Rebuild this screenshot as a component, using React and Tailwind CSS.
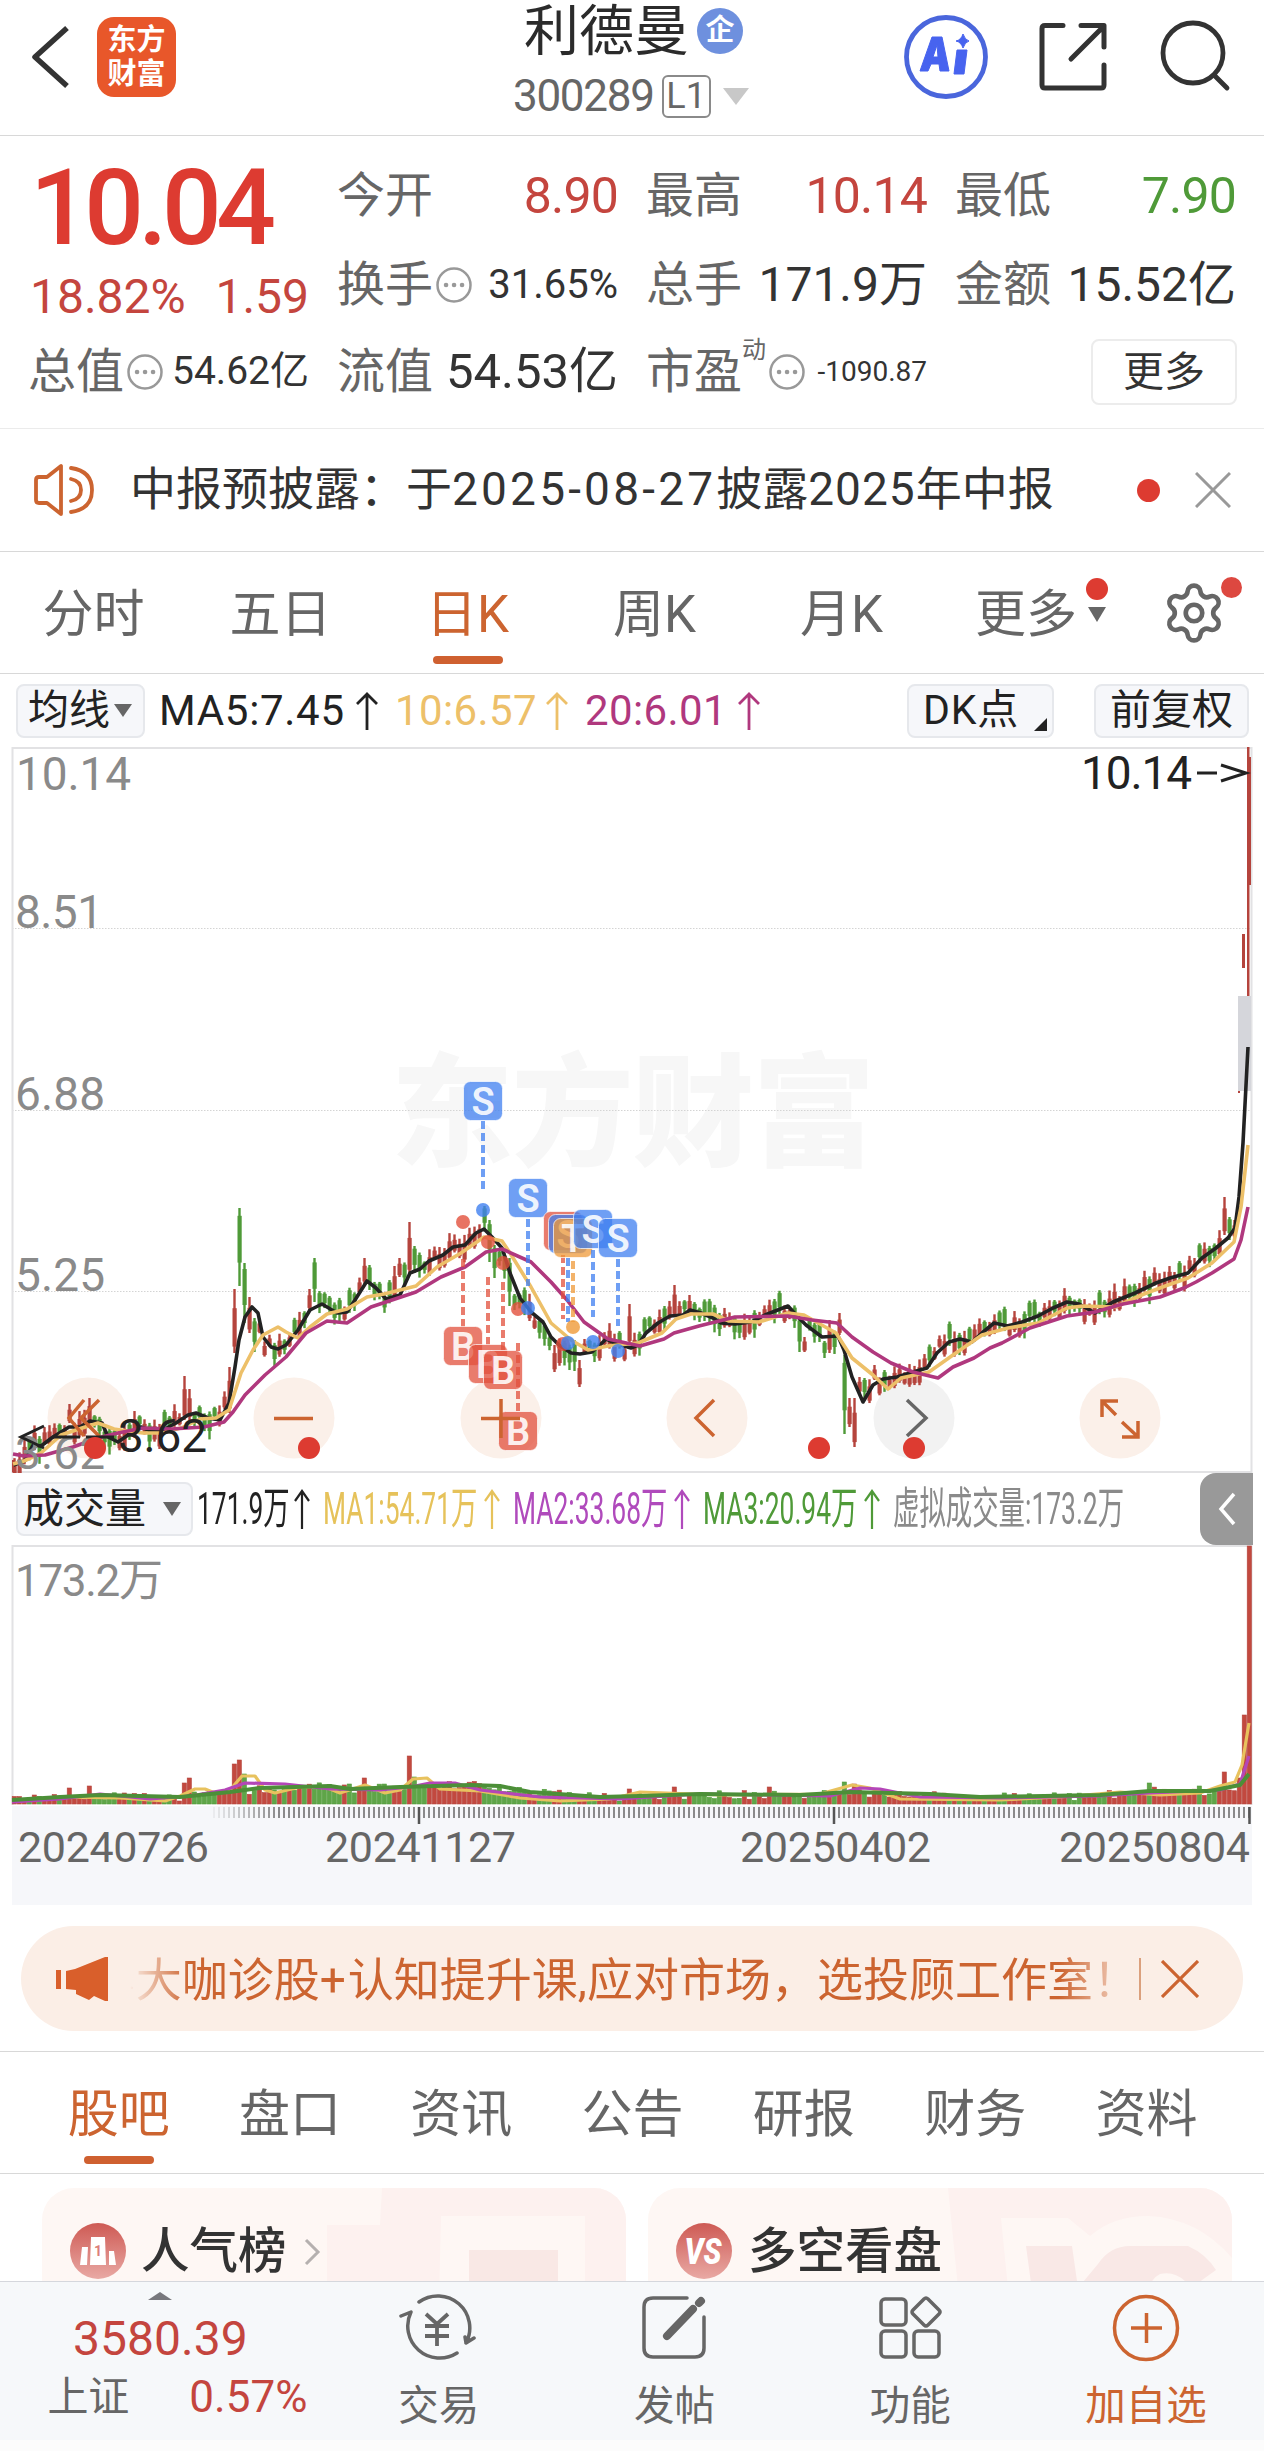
import { Settings } from 'lucide-react'

const RED = '#b5443d'
const GREEN = '#4f9a38'

// moving averages, in page pixels
const MA5 = '13.5,1465 24.5,1461 33,1445 41,1446 53,1437 69,1427 80,1427 90,1421 102,1423 108,1437 118,1442 131,1433 141,1427 151,1431 163,1430 176,1423 188,1415 196,1413 208,1418 220,1420 229,1403 235,1367 239,1340 245,1317 252,1307 258,1313 263,1337 271,1347 278,1349 286,1345 298,1330 310,1310 322,1304 337,1313 347,1312 355,1300 367,1281 376,1288 386,1299 400,1295 410,1273 420,1269 429,1261 443,1255 453,1247 465,1245 476,1233 484,1229 492,1237 502,1248 510,1273 520,1298 531,1312 543,1322 551,1337 559,1345 571,1353 580,1354 592,1352 600,1345 606,1339 614,1343 631,1348 638,1345 646,1333 658,1323 670,1316 683,1315 690,1310 701,1313 713,1318 721,1323 735,1324 751,1322 765,1315 788,1306 796,1315 806,1325 822,1337 838,1336 844,1350 852,1377 863,1402 873,1385 883,1379 897,1377 913,1372 927,1368 937,1353 949,1342 960,1339 972,1342 982,1333 994,1323 1008,1326 1022,1322 1038,1316 1053,1308 1067,1302 1079,1304 1095,1313 1113,1302 1135,1293 1156,1283 1170,1278 1188,1273 1202,1258 1216,1248 1228,1238 1235,1228 1239,1197 1243,1143 1248,1047'
const MA10 = '13,1464 24,1461 41,1453 61,1435 82,1428 98,1423 114,1429 127,1431 143,1433 163,1433 184,1427 200,1419 216,1418 229,1410 241,1373 253,1350 263,1335 278,1327 286,1332 298,1338 310,1327 327,1314 347,1309 367,1297 384,1294 400,1290 416,1286 437,1267 461,1253 484,1237 502,1241 510,1253 531,1287 551,1323 571,1340 588,1350 608,1346 638,1343 662,1333 676,1319 691,1314 713,1314 729,1321 759,1322 788,1313 804,1315 836,1333 852,1358 873,1375 888,1389 901,1378 929,1372 953,1355 982,1335 1008,1328 1038,1323 1067,1308 1083,1306 1115,1307 1144,1294 1168,1285 1188,1278 1212,1263 1234,1242 1241,1207 1248,1145'
const MA20 = '13,1454 24,1456 45,1455 73,1447 98,1438 118,1433 143,1428 171,1429 204,1427 224,1422 233,1412 245,1395 265,1375 286,1357 306,1333 327,1321 347,1323 371,1307 392,1300 416,1292 441,1277 465,1267 486,1252 502,1249 531,1262 551,1282 567,1300 584,1322 608,1339 640,1346 664,1339 674,1333 699,1326 735,1317 788,1316 812,1320 837,1323 852,1337 873,1352 891,1363 913,1372 938,1378 953,1367 974,1358 990,1348 1002,1343 1030,1328 1067,1316 1095,1312 1123,1304 1160,1297 1184,1288 1196,1282 1212,1273 1234,1259 1241,1240 1248,1207'

const VOL_A = '12,1801 60,1797 120,1798 165,1801 180,1796 195,1789 205,1789 215,1793 230,1790 242,1776 255,1776 265,1790 275,1793 300,1787 325,1787 340,1793 365,1785 385,1793 400,1790 413,1779 427,1778 440,1789 480,1791 520,1798 560,1801 610,1799 640,1792 720,1795 820,1794 852,1785 870,1788 900,1799 1000,1800 1060,1797 1120,1792 1160,1795 1200,1793 1220,1786 1235,1782 1242,1765 1249,1723'
const VOL_B = '12,1802 60,1799 100,1794 150,1799 190,1796 225,1790 245,1783 285,1784 330,1789 380,1790 410,1787 430,1783 455,1783 480,1790 540,1797 620,1799 700,1794 830,1796 860,1788 880,1789 920,1797 1000,1798 1100,1796 1150,1793 1220,1790 1240,1784 1249,1756'
const VOL_C = '12,1800 60,1797 100,1795 180,1797 230,1792 260,1788 330,1786 350,1789 400,1787 470,1785 500,1786 530,1792 600,1797 640,1796 700,1794 800,1795 850,1792 930,1794 980,1797 1100,1795 1150,1791 1210,1791 1240,1785 1249,1774'

const parse = (s) => s.split(' ').map((p) => p.split(',').map(Number))
const at = (pts, x) => {
  const i = pts.findIndex((p) => p[0] >= x)
  if (i <= 0) return i === 0 ? pts[0][1] : pts[pts.length - 1][1]
  const [x0, y0] = pts[i - 1]
  const [x1, y1] = pts[i]
  return y0 + ((y1 - y0) * (x - x0)) / (x1 - x0)
}
const rnd = (i) => {
  const v = Math.sin(i * 127.1 + 11.7) * 43758.5453
  return v - Math.floor(v)
}

// bar index -> [high, low, up]
const SPIKES = {
  11: [1404, 1423, 1], 15: [1398, 1425, 1], 34: [1376, 1420, 1], 35: [1389, 1420, 1],
  43: [1367, 1413, 1], 44: [1289, 1353, 1], 45: [1208, 1286, 0], 46: [1263, 1323, 0],
  47: [1297, 1333, 1], 48: [1318, 1352, 0], 59: [1289, 1310, 1], 60: [1258, 1302, 0],
  70: [1258, 1284, 1], 71: [1265, 1290, 0], 76: [1266, 1300, 1], 77: [1258, 1277, 1],
  79: [1222, 1275, 1], 80: [1246, 1273, 0], 94: [1206, 1230, 0], 95: [1220, 1262, 0],
  96: [1245, 1278, 0], 99: [1258, 1306, 0], 100: [1294, 1310, 0], 108: [1345, 1372, 1],
  112: [1340, 1371, 0], 113: [1360, 1387, 1], 123: [1304, 1345, 1], 132: [1285, 1317, 1],
  135: [1295, 1315, 1], 157: [1317, 1352, 0], 158: [1337, 1352, 1], 162: [1341, 1358, 0],
  163: [1320, 1353, 1], 165: [1313, 1335, 1], 166: [1355, 1434, 0], 167: [1398, 1427, 1],
  168: [1398, 1447, 1], 169: [1377, 1393, 1], 170: [1378, 1398, 0], 172: [1365, 1380, 1],
  242: [1197, 1235, 1], 243: [1217, 1240, 0], 244: [1220, 1238, 1],
}
const VOL_SPIKES = {
  11: 1788, 15: 1786, 34: 1783, 35: 1778, 44: 1764, 45: 1760, 46: 1774, 67: 1784, 70: 1778,
  79: 1756, 80: 1777, 123: 1789, 132: 1787, 151: 1787, 166: 1782, 168: 1784, 227: 1783,
  237: 1786, 242: 1772, 245: 1778, 246: 1715, 247: 1546,
}

const ma5 = parse(MA5)
const volC = parse(VOL_C)
const bars = Array.from({ length: 248 }, (_, i) => {
  const x = 14.5 + i * 5
  const mid = at(ma5, x)
  const slope = at(ma5, x + 8) - at(ma5, x - 4)
  const s = SPIKES[i]
  const up = s ? s[2] : rnd(i) + (slope < 0 ? 0.15 : -0.15) > 0.48
  const c = mid + slope * 0.25 + (rnd(i + 400) - 0.5) * 14
  const half = 6 + rnd(i + 90) * 8
  const high = s ? s[0] : c - half
  const low = s ? s[1] : c + half
  const base = at(volC, x)
  const vol = VOL_SPIKES[i] ?? Math.min(1801, base + (rnd(i + 700) - 0.45) * 9)
  // the tall bar of this run closed down, though its volume is drawn as a rise
  const volUp = up || i > 240 || i === 45
  return { i, x, up, high, low, vol, volUp }
})

const MARKS = [
  { t: 'B', x: 463, y: 1346, a: 1259, b: 1327, dot: 1222 },
  { t: 'B', x: 488, y: 1364, a: 1277, b: 1345, dot: 1242 },
  { t: 'B', x: 503, y: 1370, a: 1282, b: 1350, dot: 1263 },
  { t: 'B', x: 518, y: 1431, a: 1343, b: 1411, dot: 1309 },
  { t: 'S', x: 483, y: 1101, a: 1121, b: 1189, dot: 1210 },
  { t: 'S', x: 528, y: 1198, a: 1219, b: 1286, dot: 1308 },
  { t: '', x: 563, y: 1231, a: 1255, b: 1319, dot: 1344, color: '#e2503c' },
  { t: 'S', x: 568, y: 1234, a: 1258, b: 1322, dot: 1343 },
  { t: 'T', x: 573, y: 1238, a: 1261, b: 1322, dot: 1327, color: '#ef9a38' },
  { t: 'S', x: 593, y: 1229, a: 1250, b: 1317, dot: 1342 },
  { t: 'S', x: 618, y: 1238, a: 1259, b: 1326, dot: 1351 },
]

function Mark({ t, x, y, a, b, dot, color }) {
  const fill = color || (t === 'B' ? '#e2503c' : '#3f7ff0')
  return (
    <g>
      <line x1={x} x2={x} y1={a} y2={b} stroke={fill} strokeOpacity="0.75" strokeWidth="4" strokeDasharray="8 4" />
      <circle cx={x} cy={dot} r="7" fill={fill} fillOpacity="0.8" />
      <rect x={x - 19.5} y={y - 19.5} width="39" height="39" rx="7" fill={fill} fillOpacity="0.75" stroke="#fff" strokeOpacity="0.7" />
      <text x={x} y={y + 13.5} textAnchor="middle" fontSize="38" fontWeight="600" fill="#fff" fillOpacity="0.9">{t}</text>
    </g>
  )
}

function CandleChart() {
  const lines = { fill: 'none', strokeWidth: 3.6, strokeLinejoin: 'round' }
  return (
    <svg className="block" width="1264" height="726" viewBox="0 747 1264 726">
      <text x="391" y="1156" fontSize="122" fontWeight="900" textLength="484" fill="#f7f7f7">东方财富</text>
      <path d="M12 928.5H1251M12 1110.5H1251M12 1291.5H1251" stroke="#d4d4d4" strokeDasharray="1.5 1.5" />
      <path d="M12.500 748V1472H1251.500V748Z" fill="none" stroke="#e2e2e4" strokeWidth="2" />

      <g>
        {[88, 294, 501, 707, 914, 1120].map((x) => (
          <circle key={x} cx={x} cy="1418" r="40.500" fill={x === 914 ? '#f2f2f2' : '#fbf0e9'} />
        ))}
      </g>

      {bars.slice(0, 245).map((b) => {
        const color = b.up ? RED : GREEN
        const h = b.low - b.high
        const body = b.up ? b.high + h * 0.3 : b.high + h * 0.1
        return (
          <g key={b.i} fill={color}>
            <rect x={b.x - 1.2} y={b.high} width="2.400" height={h} />
            <rect x={b.x - 2} y={body} width="4.200" height={h * 0.6} />
          </g>
        )
      })}
      <rect x="1238" y="996" width="13" height="95" fill="#d5d6db" />
      <path d="M12 1460H15V1472H12Z" fill={RED} />
      <path d="M1242 934H1245V968H1242ZM1238 1091H1240V1093H1238ZM1247 747H1249.500V996H1247ZM1247 757H1251V885H1247Z" fill={RED} />

      <polyline points={MA5} stroke="#222" {...lines} />
      <polyline points={MA10} stroke="#edc069" {...lines} />
      <polyline points={MA20} stroke="#b0387e" {...lines} />

      {MARKS.map((m) => <Mark key={m.x} {...m} />)}

      <g fill="none" stroke="#cc6430" strokeWidth="3.500">
        <path d="M84 1400 69 1418 84 1436M99 1400 81 1418 99 1436" />
        <path d="M274 1418.500H313" />
        <path d="M481 1418.500H520M501 1399V1438" />
        <path d="M714 1400 696 1418 714 1436" />
        <path d="M907 1400 926 1418 907 1436" stroke="#666" />
        <path d="M1118 1401H1102V1417M1102 1401 1116 1415M1138 1421V1437H1122M1137 1436 1122 1422" />
      </g>

      <g fontSize="46" fill="#8a8a8a">
        <text x="16" y="790" textLength="115">10.14</text>
        <text x="15" y="928" textLength="88">8.51</text>
        <text x="15" y="1110" textLength="90">6.88</text>
        <text x="15" y="1291" textLength="90">5.25</text>
        <text x="15" y="1469" textLength="90">3.62</text>
      </g>
      <g fill="#222">
        <text x="1081" y="789" fontSize="46" textLength="111">10.14</text>
        <path d="M1197 773H1217M1221 765 1246 773 1221 781" fill="none" stroke="#222" strokeWidth="3" />
        <path d="M44 1426 21 1437 44 1448M52 1437H80M86 1437H114" fill="none" stroke="#222" strokeWidth="3" />
        <text x="118" y="1452" fontSize="46" textLength="89">3.62</text>
      </g>
      {[95, 309, 819, 914].map((x) => (
        <circle key={x} cx={x} cy="1448" r="11" fill="#dd3b31" />
      ))}
    </svg>
  )
}

function VolumeChart() {
  const lines = { fill: 'none', strokeWidth: 3.2, strokeLinejoin: 'round' }
  const ticks = Array.from({ length: 208 }, (_, i) => 214 + i * 5)
  return (
    <svg className="block" width="1264" height="360" viewBox="0 1545 1264 360">
      <rect x="12" y="1806" width="1240" height="99" fill="#f6f7fa" />
      <path d="M12.500 1805V1546H1251.500V1805" fill="none" stroke="#e2e2e4" strokeWidth="2" />
      <text x="15" y="1596" fontSize="44" textLength="148" fill="#8a8a8a">173.2万</text>
      {bars.map((b) => (
        <rect key={b.i} x={b.x - 2.3} y={b.vol} width="4.200" height={1804 - b.vol} fill={b.volUp ? '#c2493f' : '#5fa548'} stroke={b.volUp ? RED : GREEN} strokeWidth="0.6" />
      ))}
      <polyline points={VOL_A} stroke="#e8c25e" {...lines} />
      <polyline points={VOL_B} stroke="#b446b8" {...lines} />
      <polyline points={VOL_C} stroke="#4c8f38" {...lines} strokeWidth={4} />
      {ticks.map((x, i) => (
        <line key={x} x1={x} x2={x} y1="1807" y2="1818" stroke="#666" strokeWidth="1.5" strokeOpacity={Math.min(1, 0.1 + i * 0.07)} />
      ))}
      <path d="M419 1807V1824M834 1807V1824M1249.500 1807V1824" stroke="#555" strokeWidth="2.500" />
      <g fontSize="43" fill="#666">
        <text x="18" y="1862" textLength="191">20240726</text>
        <text x="325" y="1862" textLength="191">20241127</text>
        <text x="740" y="1862" textLength="191">20250402</text>
        <text x="1059" y="1862" textLength="191">20250804</text>
      </g>
    </svg>
  )
}

function UpArrow({ narrow }) {
  return narrow ? (
    <svg width="16" height="42" viewBox="0 0 16 42" fill="none" stroke="currentColor" strokeWidth="2.200">
      <path d="M8 41V3M1 13 8 3 15 13" />
    </svg>
  ) : (
    <svg width="24" height="40" viewBox="0 0 24 40" fill="none" stroke="currentColor" strokeWidth="2.800">
      <path d="M12 39V3M2 13 12 3 22 13" />
    </svg>
  )
}

function Header() {
  return (
    <header className="flex h-[136px] border-b border-[#d8d8d8]">
      <svg className="mt-[24px] ml-[30px] h-[66px] w-[40px]" viewBox="0 0 40 66" fill="none" stroke="#333" strokeWidth="5.500" strokeLinejoin="round">
        <path d="M37 4 5 33 37 62" />
      </svg>
      <div className="mt-[17px] ml-[27px] flex h-[80px] w-[79px] flex-col items-center justify-center rounded-[17px] bg-[#e8572a] text-[29px] leading-[34px] font-bold text-white">
        <span>东方</span>
        <span>财富</span>
      </div>
      <div className="ml-[337px] w-[242px]">
        <div className="flex h-[61px] items-center pl-[11px]">
          <span className="text-[55px] leading-[60px] text-[#2b2b2b]">利德曼</span>
          <span className="ml-[8px] flex h-[46px] w-[46px] items-center justify-center rounded-full bg-[#6e90de] text-[29px] leading-none font-bold text-white">企</span>
        </div>
        <div className="mt-[10px] flex h-[50px] items-center text-[#666]">
          <span className="text-[44px] leading-none tracking-[-1.300px]">300289</span>
          <span className="ml-[8px] flex h-[43px] w-[49px] items-center justify-center rounded-md border-2 border-[#8a8a8a] text-[36px] leading-none">L1</span>
          <span className="ml-[12px] h-0 w-0 border-x-[13px] border-t-[17px] border-x-transparent border-t-[#c8c8c8]" />
        </div>
      </div>
      <svg className="ml-[148px] mt-[14px] h-[86px] w-[86px]" viewBox="0 0 86 86">
        <circle cx="43" cy="43" r="39.500" fill="none" stroke="#4a66dc" strokeWidth="4.800" />
        <path d="M29 23H39L46 57H37L36 50H28L25 57H17ZM34 31 30 43H35ZM54 36H64L61 60H51ZM60 20Q62 26 66 27 62 28 60 34 58 28 53 27 58 26 60 20Z" fill="#4763ef" fillRule="evenodd" stroke="#4763ef" strokeLinejoin="round" />
      </svg>
      <svg className="ml-[48px] mt-[20px] h-[74px] w-[74px]" viewBox="0 0 74 74" fill="none" stroke="#333" strokeWidth="5" strokeLinecap="round" strokeLinejoin="round">
        <path d="M26 5.500H8Q5 5.500 5 8.500V65Q5 68 8 68H64Q67 68 67 65V45M44 5.500H67V27M66 7 34 39" />
      </svg>
      <svg className="ml-[46px] mt-[18px] h-[76px] w-[76px]" viewBox="0 0 76 76" fill="none" stroke="#333" strokeWidth="4.800" strokeLinecap="round">
        <circle cx="36" cy="35" r="30" />
        <path d="M57 57 70 70" />
      </svg>
    </header>
  )
}

function Hint() {
  return (
    <svg className="mr-[4px] ml-[3px] h-[36px] w-[36px] shrink-0" viewBox="0 0 36 36">
      <circle cx="18" cy="18" r="16.500" fill="none" stroke="#999" strokeWidth="2.500" />
      <path d="M10 18H10.100M18 18H18.100M26 18H26.100" stroke="#999" strokeWidth="4.500" strokeLinecap="round" />
    </svg>
  )
}

function Stat({ label, children, value }) {
  return (
    <div className="flex h-[88px] w-[281px] items-center pt-[3px] text-[48px] leading-none whitespace-nowrap text-[#666]">
      <span>{label}</span>
      {children}
      <span className={`ml-auto ${value[1]}`}>{value[0]}</span>
    </div>
  )
}

function Quote() {
  return (
    <section className="h-[293px] border-b border-[#ebebeb] pt-[14px] pl-[28px]">
      <div className="flex gap-[28px]">
        <div className="w-[281px] pl-[2px] whitespace-nowrap text-[#dd3b31]">
          <div className="flex h-[116px] items-center text-[105px] leading-none font-medium tracking-[-5.500px]">10.04</div>
          <div className="flex h-[62px] items-center justify-between text-[48px] leading-none text-[#c4453e]">
            <span>18.82%</span>
            <span>1.59</span>
          </div>
        </div>
        <div className="grid grid-cols-3 gap-x-[28px]">
          <Stat label="今开" value={['8.90', 'text-[50px] tracking-[-0.800px] text-[#c4453e]']} />
          <Stat label="最高" value={['10.14', 'text-[50px] tracking-[-0.800px] text-[#c4453e]']} />
          <Stat label="最低" value={['7.90', 'text-[50px] tracking-[-0.800px] text-[#4f9a38]']} />
          <Stat label="换手" value={['31.65%', 'text-[40px] text-[#333]']}><Hint /></Stat>
          <Stat label="总手" value={['171.9万', 'text-[#333]']} />
          <Stat label="金额" value={['15.52亿', 'text-[#333]']} />
        </div>
      </div>
      <div className="-mt-[2px] flex gap-[28px]">
        <Stat label="总值" value={['54.62亿', 'text-[39px] text-[#333]']}><Hint /></Stat>
        <Stat label="流值" value={['54.53亿', 'text-[49px] text-[#333]']} />
        <Stat label="市盈" value={['-1090.87', 'text-[28px] text-[#333]']}>
          <span className="-mt-[44px] text-[24px]">动</span>
          <span className="flex"><Hint /></span>
        </Stat>
        <div className="mt-[13px] ml-[136px] flex h-[66px] w-[146px] items-center justify-center rounded-lg border-2 border-[#ececec] text-[41px] leading-none text-[#333]">更多</div>
      </div>
    </section>
  )
}

function Notice() {
  return (
    <section className="flex h-[123px] items-center border-b border-[#d8d8d8]">
      <svg className="ml-[32px] h-[54px] w-[64px]" viewBox="0 0 64 54" fill="none" stroke="#cc6430" strokeWidth="3.800" strokeLinecap="round" strokeLinejoin="round">
        <path d="M29 3V51L15 40H7Q4 40 4 37V17Q4 14 7 14H15ZM39 5Q60 8 60 27T39 49M39 16Q49 18 49 27T39 38" />
      </svg>
      <p className="mb-[3px] ml-[34px] w-[930px] text-[46px] leading-none whitespace-nowrap text-[#333]">
        中报预披露：于<span className="tracking-[3.200px]">2025-08-27</span>披露<span className="tracking-[1px]">2025</span>年中报
      </p>
      <span className="ml-[77px] h-[23px] w-[23px] rounded-full bg-[#dd3b31]" />
      <svg className="ml-[35px] h-[36px] w-[36px]" viewBox="0 0 36 36" stroke="#999" strokeWidth="3">
        <path d="M1 1 35 35M35 1 1 35" />
      </svg>
    </section>
  )
}

function PeriodTabs() {
  const tabs = ['分时', '五日', '日K', '周K', '月K']
  return (
    <nav className="flex h-[122px] items-center border-b border-[#d8d8d8] text-[51px] leading-none text-[#666]">
      {tabs.map((t) => (
        <div key={t} className={`relative flex h-full w-[187px] items-center justify-center pt-[3px] ${t === '日K' ? 'text-[#cc6430]' : ''}`}>
          {t}
          {t === '日K' && <span className="absolute bottom-[9px] h-[8px] w-[70px] rounded-full bg-[#cf6030]" />}
        </div>
      ))}
      <div className="relative ml-[40px] flex items-center pt-[3px]">
        更多
        <span className="ml-[11px] border-x-[9px] border-t-[15px] border-x-transparent border-t-[#666]" />
        <span className="absolute -top-[8px] -right-[2px] h-[22px] w-[22px] rounded-full bg-[#dd3b31]" />
      </div>
      <div className="relative ml-[55px]">
        <Settings className="h-[66px] w-[66px]" strokeWidth={1.7} />
        <span className="absolute -top-[3px] -right-[15px] h-[21px] w-[21px] rounded-full bg-[#dd4840]" />
      </div>
    </nav>
  )
}

const chip = 'flex items-center rounded-lg border-2 border-[#e6e8ec] bg-[#f6f7fa] text-[41px] leading-none text-[#222] whitespace-nowrap'

function AverageBar() {
  return (
    <div className="flex h-[73px] items-center text-[42px] leading-none whitespace-nowrap">
      <div className={`${chip} ml-[16px] h-[54px] w-[129px] pl-[10px]`}>
        均线
        <span className="ml-[4px] border-x-[9px] border-t-[13px] border-x-transparent border-t-[#666]" />
      </div>
      <div className="ml-[14px] flex w-[236px] items-center justify-between pr-[16px] text-[#222]"><span className="tracking-[0.700px]">MA5:7.45</span><UpArrow /></div>
      <div className="flex w-[190px] items-center justify-between pr-[16px] text-[#edc069]"><span className="tracking-[0.400px]">10:6.57</span><UpArrow /></div>
      <div className="flex w-[176px] items-center justify-between text-[#b0387e]"><span className="tracking-[0.400px]">20:6.01</span><UpArrow /></div>
      <div className={`${chip} ml-[146px] h-[54px] w-[147px] justify-between pr-[5px] pl-[14px]`}>
        <span className="tracking-[0.800px]">DK点</span>
        <span className="mt-[28px] border-b-[13px] border-l-[13px] border-b-[#222] border-l-transparent" />
      </div>
      <div className={`${chip} ml-[40px] h-[54px] w-[155px] justify-center`}>前复权</div>
    </div>
  )
}

function VolumeItem({ text, box, color }) {
  return (
    <div className={`flex items-center ${color}`}>
      <span className={`block ${box}`}>
        <span className="inline-block origin-left scale-x-60">{text}</span>
      </span>
      <UpArrow narrow />
    </div>
  )
}

function VolumeBar() {
  return (
    <div className="flex h-[72px] items-center text-[44px] leading-none whitespace-nowrap">
      <div className={`${chip} ml-[16px] h-[54px] w-[177px] pl-[5px]`}>
        成交量
        <span className="ml-[17px] border-x-[9px] border-t-[14px] border-x-transparent border-t-[#666]" />
      </div>
      <div className="flex gap-[13px] pl-[4px]">
        <VolumeItem text="171.9万" box="w-[97px]" color="text-[#222]" />
        <VolumeItem text="MA1:54.71万" box="w-[161px]" color="text-[#e6c25a]" />
        <VolumeItem text="MA2:33.68万" box="w-[161px]" color="text-[#b04abc]" />
        <VolumeItem text="MA3:20.94万" box="w-[161px]" color="text-[#4f9a38]" />
      </div>
      <span className="ml-[13px] w-[307px] text-[#8a8a8a]">
        <span className="inline-block origin-left scale-x-60">虚拟成交量:173.2万</span>
      </span>
      <div className="flex h-[72px] w-[53px] items-center justify-center rounded-l-2xl bg-[#999]">
        <svg width="20" height="34" viewBox="0 0 20 34" fill="none" stroke="#fff" strokeWidth="3.500">
          <path d="M17 2 4 17 17 32" />
        </svg>
      </div>
    </div>
  )
}

function Banner() {
  return (
    <section className="h-[147px] border-b border-[#d8d8d8] px-[21px] pt-[21px]">
      <div className="flex h-[105px] items-center rounded-full bg-[#fbeee6] text-[#cc6430]">
        <svg className="ml-[34px] h-[46px] w-[54px]" viewBox="0 0 54 46" fill="#d95f2b">
          <path d="M1 14H6V33H1ZM11 15 20 13 50 1H53V45H50L39 40 34 44 21 38V34L11 33Z" />
        </svg>
        <p className="mt-[3px] ml-[20px] w-[990px] overflow-hidden text-[46px] leading-[66px] whitespace-nowrap [mask-image:linear-gradient(to_right,transparent,black_60px,black_930px,transparent_1010px)]">
          <span className="mr-[1px] text-[22px] leading-none">·</span>大咖诊股<span className="tracking-[2px]">+</span>认知提升课,应对市场，选投顾工作室！
        </p>
        <span className="ml-[20px] h-[42px] w-[2px] bg-[#dba07d]" />
        <svg className="ml-[20px] h-[38px] w-[38px]" viewBox="0 0 38 38" stroke="#cc6430" strokeWidth="3.200">
          <path d="M1 1 37 37M37 1 1 37" />
        </svg>
      </div>
    </section>
  )
}

function SectionTabs() {
  const tabs = ['股吧', '盘口', '资讯', '公告', '研报', '财务', '资料']
  return (
    <nav className="flex h-[122px] border-b border-[#d8d8d8] pl-[33px] text-[51px] leading-none text-[#666]">
      {tabs.map((t, i) => (
        <div key={t} className={`relative flex w-[171.300px] items-center justify-center pt-[3px] ${i === 0 ? 'text-[#cc6430]' : ''}`}>
          {t}
          {i === 0 && <span className="absolute bottom-[9px] h-[8px] w-[70px] rounded-full bg-[#cf6030]" />}
        </div>
      ))}
    </nav>
  )
}

function Cards() {
  return (
    <section className="flex h-[107px] gap-[22px] overflow-hidden pt-[14px] pl-[42px] text-[48.500px] leading-none font-medium text-[#333]">
      <div className="relative h-[200px] w-[584px] overflow-hidden rounded-[32px] bg-[#fef7f4]">
        <svg className="absolute inset-0" width="584" height="200">
          <path d="M340 0H584V200H285V37H338Z" fill="#fdf1ef" />
          <path d="M399 28H543V200H395Z" fill="#fef7f4" />
          <path d="M427 62H516V200H427Z" fill="#f9e8e5" />
        </svg>
        <div className="relative flex h-[128px] items-center pl-[28px]">
          <svg className="mb-[2px]" width="56" height="56" viewBox="0 0 56 56">
            <defs>
              <linearGradient id="badge" x2="0" y2="1">
                <stop stopColor="#ce5a54" />
                <stop offset="1" stopColor="#e9a9a4" />
              </linearGradient>
            </defs>
            <circle cx="28" cy="28" r="28" fill="url(#badge)" />
            <path d="M12 24H18L17 42H10ZM21 14H35L36 42H20ZM39 28H44L46 42H39Z" fill="#fff" />
            <text x="28" y="33" textAnchor="middle" fontSize="14" fontWeight="700" fill="#dd7f79">1</text>
          </svg>
          <span className="ml-[15px]">人气榜</span>
          <svg className="ml-[17px]" width="18" height="30" viewBox="0 0 18 30" fill="none" stroke="#b5b0af" strokeWidth="3">
            <path d="M2 3 14 15 2 27" />
          </svg>
        </div>
      </div>
      <div className="relative h-[200px] w-[584px] overflow-hidden rounded-[32px] bg-[#fef7f4]">
        <svg className="absolute inset-0" width="584" height="200">
          <path d="M300 0H584V200H320Z" fill="#fdf1ef" />
          <path d="M353 30H420L442 48Q465 28 500 28 550 30 584 70V200H370Z" fill="#fef7f4" />
          <path d="M378 58H424L430 100 450 76Q462 58 482 58H540Q558 66 568 82L543 100Q530 82 512 86 500 92 500 110H385Z" fill="#f9e8e6" />
        </svg>
        <div className="relative flex h-[128px] items-center pl-[28px]">
          <svg className="mb-[2px]" width="56" height="56" viewBox="0 0 56 56">
            <circle cx="28" cy="28" r="28" fill="url(#badge)" />
            <text x="27" y="41" textAnchor="middle" fontSize="36" fontWeight="900" fontStyle="italic" textLength="37" lengthAdjust="spacingAndGlyphs" fill="#fff">VS</text>
          </svg>
          <span className="ml-[16px]">多空看盘</span>
        </div>
      </div>
    </section>
  )
}

function NavItem({ label, children, color = 'text-[#666]' }) {
  return (
    <div className={`flex w-[236px] flex-col items-center pt-[10px] ${color}`}>
      <svg width="80" height="72" viewBox="0 0 80 72" fill="none" stroke="currentColor" strokeWidth="3.500" strokeLinecap="round" strokeLinejoin="round">
        {children}
      </svg>
      <span className="mt-[22px] text-[40.500px] leading-[40px]">{label}</span>
    </div>
  )
}

function BottomBar() {
  return (
    <footer className="flex h-[159px] border-t border-[#d5d7dd] bg-[#f6f8fa]">
      <div className="flex w-[321px] flex-col items-center pt-[10px]">
        <span className="border-x-[12px] border-b-[8px] border-x-transparent border-b-[#77777c]" />
        <span className="mt-[15px] text-[48px] leading-[48px] text-[#c4453e]">3580.39</span>
        <div className="mt-[12px] ml-[34px] flex w-[260px] items-center justify-between leading-[44px]">
          <span className="text-[41px] text-[#666]">上证</span>
          <span className="text-[44px] text-[#c4453e]">0.57%</span>
        </div>
      </div>
      <NavItem label="交易">
        <path d="M20 10A32 32 0 0 1 67 51L75 46M67 51 66 45M2 24 12 20A32 32 0 0 0 58 61" />
        <path d="M27 22 38 32 49 22M38 32V54M26 34H50M26 44H50" strokeWidth="3.800" strokeLinecap="butt" />
      </NavItem>
      <NavItem label="发帖">
        <path d="M53 6H19Q10 6 10 15V56Q10 65 19 65H61Q70 65 70 56V25" />
        <path d="M59 17 33 44M67 9 65 11" strokeWidth="8" />
        <path d="M30 47 38 43 34 39Z" fill="currentColor" stroke="none" />
      </NavItem>
      <NavItem label="功能">
        <rect x="11" y="7" width="25" height="26" rx="4" />
        <rect x="11" y="39" width="25" height="26" rx="4" />
        <rect x="44" y="39" width="25" height="26" rx="4" />
        <path d="M54 7Q56 5 58 7L69 18Q71 20 69 22L58 33Q56 35 54 33L43 22Q41 20 43 18Z" />
      </NavItem>
      <NavItem label="加自选" color="text-[#cc6430]">
        <circle cx="40" cy="36" r="31.500" />
        <path d="M25 36H56M40.500 21V51" strokeLinecap="butt" />
      </NavItem>
    </footer>
  )
}

export default function App() {
  return (
    <div className="h-[2451px] w-[1264px] overflow-hidden bg-white font-['Roboto','Noto_Sans_CJK_SC',sans-serif]">
      <Header />
      <Quote />
      <Notice />
      <PeriodTabs />
      <AverageBar />
      <CandleChart />
      <VolumeBar />
      <VolumeChart />
      <Banner />
      <SectionTabs />
      <Cards />
      <BottomBar />
      <div className="h-[11px] bg-[#fcfcfc]" />
    </div>
  )
}
